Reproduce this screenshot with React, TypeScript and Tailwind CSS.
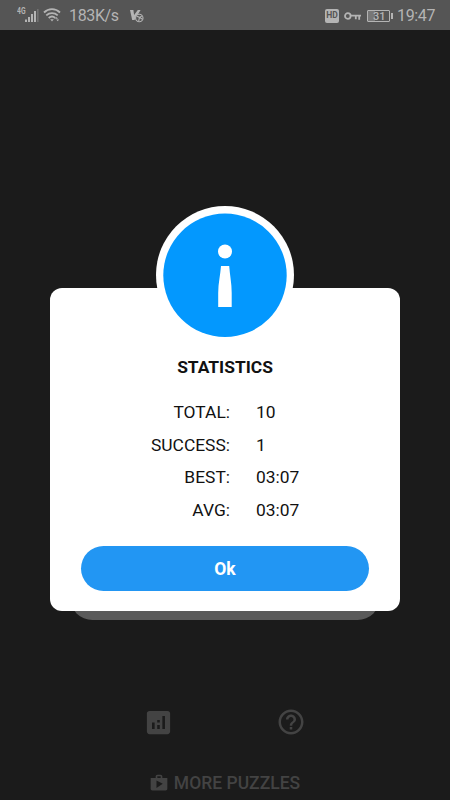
import { MdAnalytics, MdHelpOutline, MdShop } from "react-icons/md";

const stats = [
  { label: "TOTAL:", value: "10" },
  { label: "SUCCESS:", value: "1" },
  { label: "BEST:", value: "03:07" },
  { label: "AVG:", value: "03:07" },
];

function SignalIcon() {
  return (
    <svg width="22" height="18" viewBox="0 0 22 18" fill="currentColor">
      <text x="0" y="8" fontSize="8.5" fontWeight="700" textLength="8.5" lengthAdjust="spacingAndGlyphs">4G</text>
      <rect x="8" y="13.5" width="2" height="2.5" />
      <rect x="11" y="11" width="2" height="5" />
      <rect x="14" y="8" width="2" height="8" />
      <rect x="17" y="5" width="2" height="11" />
      <rect x="20" y="3" width="1.6" height="13" opacity="0.3" />
    </svg>
  );
}

function WifiIcon() {
  return (
    <svg width="18" height="16" viewBox="0 0 18 16" fill="none" stroke="currentColor" strokeWidth="1.8">
      <path d="M1 5.5C5.5 1 12.5 1 17 5.5" />
      <path d="M3.3 8.3c3.2-3 8.2-3 11.4 0" />
      <path d="M5.7 11c1.9-1.7 4.7-1.7 6.6 0" />
      <path d="M7.2 12.2h3.6L9 14.4z" fill="currentColor" stroke="none" />
      <path d="M12 11.8l1.5-1.8 1.5 1.8zM13.2 12.4h3l-1.5 1.8z" fill="currentColor" stroke="none" />
    </svg>
  );
}

function VpnIcon() {
  return (
    <svg width="14" height="14" viewBox="0 0 14 14" fill="none" stroke="currentColor">
      <path d="M0 1h3.4l0.7 5L7.8 1h2.8L4.5 11H2.2z" fill="currentColor" stroke="none" />
      <circle cx="9.3" cy="9" r="3.7" fill="#555" strokeWidth="1.1" />
      <path d="M6.5 7l3 1.4-.8 3.6M12 6.8l-2.2 1.6 2.6 1.8" strokeWidth="1.1" />
    </svg>
  );
}

function StatusBar() {
  return (
    <header className="flex h-[30px] shrink-0 items-center bg-[#555] pr-[15px] pl-[17px] text-[#b4b4b4]">
      <SignalIcon />
      <span className="ml-[4px]"><WifiIcon /></span>
      <span className="ml-[8px] w-[50px] pt-[2px] text-[16px] leading-none tracking-[-0.35px]">183K/s</span>
      <span className="ml-[11px] pt-px"><VpnIcon /></span>
      <div className="ml-auto flex items-center pt-px">
        <span className="flex h-[14px] w-[14px] items-center justify-center rounded-[2px] bg-[#b4b4b4] text-[8.5px] leading-none font-bold text-[#555]">
          HD
        </span>
        <svg className="ml-[5px]" width="17" height="10" viewBox="0 0 17 10" fill="none" stroke="currentColor" strokeWidth="1.8">
          <circle cx="3.8" cy="5" r="2.8" />
          <path d="M6.5 4.6H17M15.2 4.6v4.2M11.8 4.6v3.6" />
        </svg>
        <span className="ml-[6px] flex h-[12px] w-[23px] items-center rounded-[1px] border border-[#b4b4b4] bg-linear-to-r from-[#777] from-31% to-[#555] to-31% pt-px pl-[5px] text-[11px] leading-none font-medium">
          31
        </span>
        <span className="ml-px h-[6px] w-[2px] bg-[#b4b4b4]" />
        <span className="ml-[4px] w-[38px] pt-px text-[16px] leading-none tracking-[-0.35px]">19:47</span>
      </div>
    </header>
  );
}

function InfoBadge() {
  return (
    <div className="absolute -top-[82px] left-1/2 flex h-[138px] w-[138px] -translate-x-1/2 items-center justify-center rounded-full bg-white">
      <svg width="124" height="124" viewBox="0 0 124 124">
        <circle cx="62" cy="62.3" r="61.7" fill="#0398fe" />
        <circle cx="62" cy="38.5" r="7" fill="#fff" />
        <path d="M58 53h8.200c.6 9 2.500 17 2.500 27v14H55.200v-14c0-10 2.200-18 2.800-27z" fill="#fff" />
      </svg>
    </div>
  );
}

function StatisticsDialog() {
  return (
    <div className="relative z-10 flex h-[323px] w-[350px] flex-col items-center rounded-[12px] bg-white text-[#111]">
      <InfoBadge />
      <h2 className="mt-[69px] text-[17.4px] leading-5 font-bold">STATISTICS</h2>
      <dl className="mt-[19px] w-full text-[17.4px]">
        {stats.map(s => (
          <div key={s.label} className="flex h-[32.5px] items-center">
            <dt className="w-[180px] text-right">{s.label}</dt>
            <dd className="ml-[26px]">{s.value}</dd>
          </div>
        ))}
      </dl>
      <button className="mt-[19.5px] h-[45px] w-[288px] rounded-full bg-[#2296f3] pt-[2px] text-[17.5px] font-bold text-white">
        Ok
      </button>
    </div>
  );
}

export default function App() {
  return (
    <div className="flex h-[800px] w-[450px] flex-col overflow-hidden bg-[#1b1b1b] font-['Roboto',sans-serif]">
      <StatusBar />
      <main className="flex flex-1 flex-col items-center pt-[258px] text-[#434343]">
        <StatisticsDialog />
        {/* menu button peeking out from behind the dialog */}
        <div className="-mt-[36px] h-[45px] w-[310px] shrink-0 rounded-full bg-[#5a5a5a]" />
        <div className="mt-[87px] mr-[2px] flex w-[163px] justify-between">
          <MdAnalytics size={31} />
          <MdHelpOutline size={30} />
        </div>
        <div className="mt-[33px] mr-px flex items-center gap-[5px]">
          <MdShop size={20} />
          <span className="text-[17.5px] leading-6 font-medium">MORE PUZZLES</span>
        </div>
      </main>
    </div>
  );
}
